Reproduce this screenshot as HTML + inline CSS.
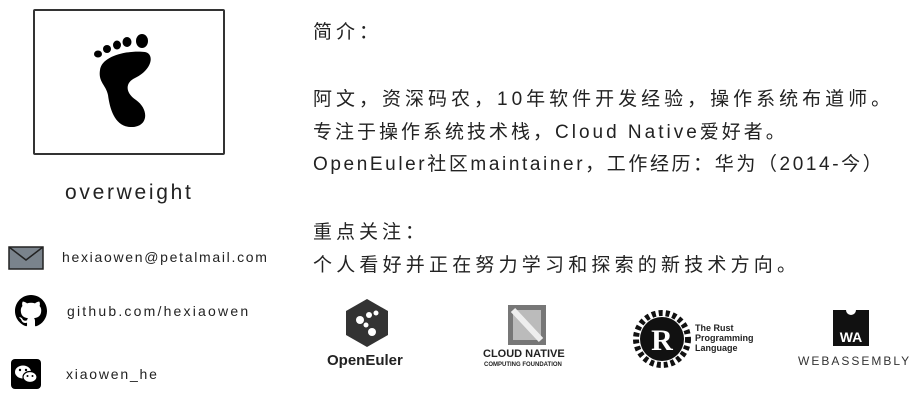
<html><head><style>
body{margin:0;width:922px;height:400px;background:#fff;position:relative;overflow:hidden;font-family:"Liberation Sans","Noto Sans CJK SC",sans-serif;color:#222}
.a{position:absolute;white-space:nowrap}
.t{font-size:19px;left:313px}
</style></head><body>
<div class="a" style="left:33px;top:9px;width:188px;height:142px;border:2px solid #333;border-radius:2px"></div>
<svg class="a" style="left:90px;top:30px" width="70" height="100" viewBox="0 0 70 100">
<ellipse cx="8" cy="24" rx="4" ry="3.5"/><ellipse cx="17" cy="19" rx="4" ry="4"/><ellipse cx="27" cy="15" rx="4" ry="4.5"/><ellipse cx="37" cy="12" rx="4.5" ry="5"/><ellipse cx="52" cy="11" rx="6" ry="7"/>
<path d="M10 40 C12 25,40 20,55 22 C65 24,62 40,45 48 C36 52,34 62,46 70 C60 80,58 98,40 97 C25 96,20 80,18 65 C16 55,8 52,10 40Z"/>
</svg>
<div class="a" style="left:65px;top:181px;font-size:21px;letter-spacing:2.7px">overweight</div>
<svg class="a" style="left:8px;top:246px" width="36" height="24"><rect x="1" y="1" width="34" height="22" fill="#7a838c" stroke="#222" stroke-width="1.5"/><path d="M1 1 L18 14 L35 1" fill="none" stroke="#222" stroke-width="1.5"/></svg>
<div class="a" style="left:62px;top:249px;font-size:14px;letter-spacing:1.7px">hexiaowen@petalmail.com</div>
<svg class="a" style="left:15px;top:295px" width="32" height="32" viewBox="0 0 16 16"><path d="M8 0C3.58 0 0 3.580 0 8c0 3.54 2.290 6.53 5.47 7.59.4.07.55-.17.55-.38v-1.330c-2.23.48-2.7-1.07-2.7-1.07-.36-.93-.89-1.17-.89-1.17-.73-.5.05-.49.05-.49.8.06 1.23.83 1.23.83.71 1.23 1.88.87 2.33.66.07-.52.28-.87.51-1.07-1.78-.2-3.64-.89-3.64-3.95 0-.87.31-1.59.82-2.15-.08-.2-.36-1.02.08-2.12 0 0 .67-.21 2.2.82.64-.18 1.32-.27 2-.27.68 0 1.36.09 2 .27 1.53-1.04 2.2-.82 2.2-.82.44 1.1.16 1.92.08 2.12.51.56.82 1.27.82 2.15 0 3.07-1.87 3.75-3.65 3.95.29.25.54.73.54 1.48v2.2c0 .21.15.46.55.38A8.013 8.013 0 0016 8c0-4.42-3.58-8-8-8z"/></svg>
<div class="a" style="left:67px;top:303px;font-size:14px;letter-spacing:2.2px">github.com/hexiaowen</div>
<svg class="a" style="left:11px;top:359px" width="30" height="30"><rect width="30" height="30" rx="4"/><ellipse cx="12" cy="13" rx="8" ry="6.5" fill="#fff"/><ellipse cx="19" cy="18" rx="7" ry="5.5" fill="#fff" stroke="#000" stroke-width="1.2"/><circle cx="9" cy="11" r="1.2"/><circle cx="15" cy="11" r="1.2"/><circle cx="16.5" cy="17" r="1"/><circle cx="21.5" cy="17" r="1"/></svg>
<div class="a" style="left:66px;top:366px;font-size:14px;letter-spacing:1.8px">xiaowen_he</div>
<div class="a t" style="top:17px;letter-spacing:4px">简介：</div>
<div class="a t" style="top:84px;letter-spacing:4px">阿文，资深码农，10年软件开发经验，操作系统布道师。</div>
<div class="a t" style="top:117px;letter-spacing:3px">专注于操作系统技术栈，Cloud Native爱好者。</div>
<div class="a t" style="top:149px;letter-spacing:2.6px">OpenEuler社区maintainer，工作经历：华为（2014-今）</div>
<div class="a t" style="top:217px;letter-spacing:4px">重点关注：</div>
<div class="a t" style="top:250px;letter-spacing:4.2px">个人看好并正在努力学习和探索的新技术方向。</div>
<svg class="a" style="left:345px;top:298px" width="44" height="50" viewBox="0 0 44 50"><path d="M22 1 L43 13 L43 37 L22 49 L1 37 L1 13Z" fill="#333"/><circle cx="15" cy="22" r="4" fill="#fff"/><circle cx="24" cy="17" r="3" fill="#fff"/><circle cx="31" cy="15" r="2.5" fill="#fff"/><circle cx="27" cy="34" r="4" fill="#fff"/><circle cx="21" cy="27" r="2.5" fill="#fff"/></svg>
<div class="a" style="left:327px;top:352px;font-size:15px;font-weight:bold">OpenEuler</div>
<svg class="a" style="left:508px;top:305px" width="38" height="40"><rect width="38" height="40" fill="#777"/><rect x="5" y="5" width="28" height="30" fill="#bbb"/><path d="M5 5 L33 35" stroke="#eee" stroke-width="6"/></svg>
<div class="a" style="left:483px;top:348px;font-size:11px;font-weight:bold">CLOUD NATIVE</div>
<div class="a" style="left:484px;top:362px;font-size:6px;font-weight:bold">COMPUTING FOUNDATION</div>
<svg class="a" style="left:633px;top:310px" width="58" height="58" viewBox="0 0 58 58"><circle cx="29" cy="29" r="26" fill="none" stroke="#111" stroke-width="6" stroke-dasharray="4 3"/><circle cx="29" cy="29" r="22" fill="#111"/><text x="29" y="40" text-anchor="middle" font-size="30" font-weight="bold" fill="#fff" font-family="Liberation Serif">R</text></svg>
<div class="a" style="left:695px;top:323px;font-size:9px;font-weight:bold;line-height:10px">The Rust<br>Programming<br>Language</div>
<svg class="a" style="left:833px;top:310px" width="36" height="36"><path d="M0 0 H13 A5 5 0 0 0 23 0 H36 V36 H0Z" fill="#111"/><text x="18" y="32" text-anchor="middle" font-size="14" font-weight="bold" fill="#fff" font-family="Liberation Sans">WA</text></svg>
<div class="a" style="left:798px;top:354px;font-size:12px;letter-spacing:2px;color:#333">WEBASSEMBLY</div>
</body></html>
